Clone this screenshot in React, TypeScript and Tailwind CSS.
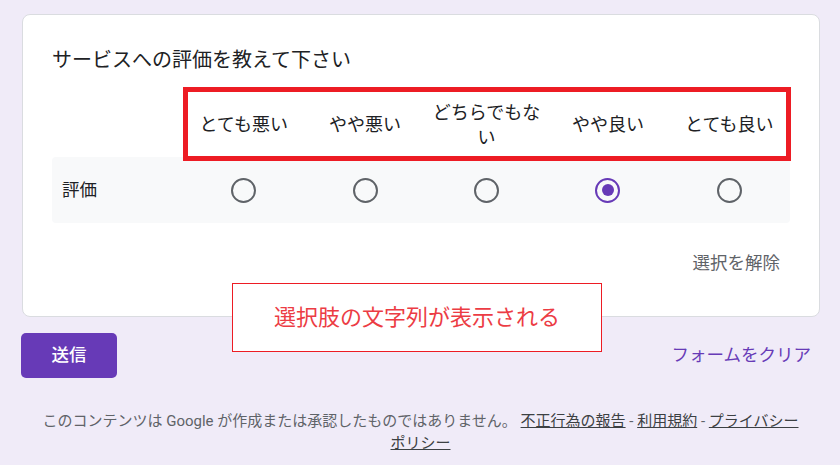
import React from "react";

const options = ["とても悪い", "やや悪い", "どちらでもない", "やや良い", "とても良い"];

const Radio: React.FC<{ checked?: boolean }> = ({ checked }) => (
  <div
    className={`w-[25px] h-[25px] rounded-full border-[2.5px] flex items-center justify-center ${
      checked ? "border-[#673ab7]" : "border-[#5f6368]"
    }`}
  >
    {checked && <div className="w-[12px] h-[12px] rounded-full bg-[#673ab7]" />}
  </div>
);

const App: React.FC = () => (
  <div
    className="relative min-h-[465px] bg-[#f0ebf8] pt-[14px] pl-[21px] text-[#202124]"
    style={{ fontFamily: '"Roboto", "Noto Sans CJK JP", sans-serif' }}
  >
    <div className="w-[799px]">
      {/* question card */}
      <div className="ml-[1px] bg-white border border-[#dadce0] rounded-[8px] pt-[31px] pl-[29px] pr-[29px] pb-[41px]">
        <div className="text-[20px] leading-[28px]">サービスへの評価を教えて下さい</div>

        <div className="relative mt-[18px] grid grid-cols-[131px_repeat(5,1fr)] h-[65px] items-center">
          <div />
          {options.map((o) => (
            <div key={o} className="text-[18px] leading-[25px] text-center px-[2px]">
              {o}
            </div>
          ))}
          <div className="absolute left-[131px] top-[-5px] w-[608px] h-[74px] border-[5px] border-[#ed1c24] pointer-events-none" />
        </div>

        <div className="grid grid-cols-[131px_repeat(5,1fr)] h-[66px] items-center bg-[#f8f9fa] rounded-[4px]">
          <div className="pl-[10px] text-[17.5px]">評価</div>
          {options.map((o, i) => (
            <div key={o} className="flex justify-center">
              <Radio checked={i === 3} />
            </div>
          ))}
        </div>

        <div className="flex justify-end mt-[28px] pr-[10px]">
          <span className="text-[17.5px] leading-[24px] text-[#5f6368]">選択を解除</span>
        </div>
      </div>

      {/* actions */}
      <div className="flex items-center justify-between mt-[16px] pr-[9px]">
        <button className="w-[96px] h-[45px] rounded-[5px] bg-[#673ab7] text-white text-[17.5px] font-medium">
          送信
        </button>
        <span className="text-[17.5px] text-[#673ab7]">フォームをクリア</span>
      </div>

      {/* footer */}
      <div className="mt-[32px] text-center text-[15px] leading-[22px] text-[#5f6368]">
        このコンテンツは Google が作成または承認したものではありません。{" "}
        <span className="underline text-[#3c4043]">不正行為の報告</span> -{" "}
        <span className="underline text-[#3c4043]">利用規約</span> -{" "}
        <span className="underline text-[#3c4043]">
          プライバシー
          <br />
          ポリシー
        </span>
      </div>
    </div>

    {/* annotation */}
    <div className="absolute left-[232px] top-[283px] w-[370px] h-[69px] bg-white border border-[#ed1c24] flex items-center justify-center">
      <span className="text-[22px] text-[#ec3c44]">選択肢の文字列が表示される</span>
    </div>
  </div>
);

export default App;
